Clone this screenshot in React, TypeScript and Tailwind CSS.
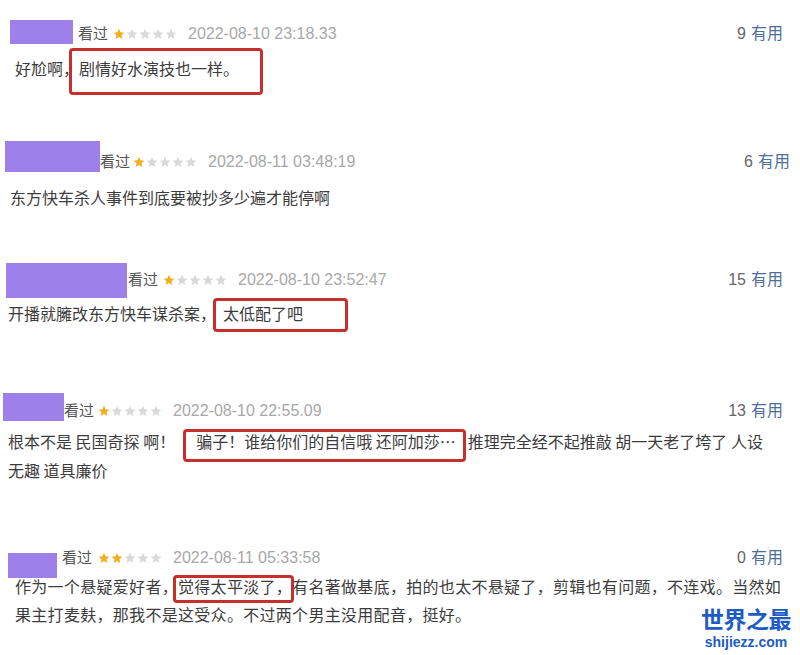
import type { ReactNode } from 'react';

function Stars({ n }: { n: number }) {
  return (
    <span className="flex gap-[1px]">
      {[0, 1, 2, 3, 4].map((i) => (
        <svg
          key={i}
          viewBox="0 0 24 24"
          className={`w-[12px] h-[12px] ${i < n ? 'fill-[#f2b01e]' : 'fill-[#d9d9d9]'}`}
        >
          <path d="M12 1.5l3.1 7.1 7.7.7-5.8 5.1 1.7 7.6L12 18l-6.7 4 1.7-7.6-5.8-5.1 7.7-.7z" />
        </svg>
      ))}
    </span>
  );
}

// red annotation box drawn over part of a comment
function Mark({ children, cls, box }: { children: ReactNode; cls: string; box: string }) {
  return (
    <span className={`relative inline-block ${cls}`}>
      {children}
      <span className={`absolute border-[3px] border-[#c5302c] rounded-[4px] ${box}`} />
    </span>
  );
}

interface CommentProps {
  section: string;
  rect: string;
  headMt: string;
  starsMl: string;
  likesMr: string;
  stars: number;
  time: string;
  likes: number;
  body: string;
  children: ReactNode;
}

function Comment({ section, rect, headMt, starsMl, likesMr, stars, time, likes, body, children }: CommentProps) {
  return (
    <section className={section}>
      <div className="flex items-start">
        <div className={`shrink-0 bg-[#9d80ea] ${rect}`} />
        <div className={`flex items-center h-[24px] ${headMt}`}>
          <span className="text-[15px] text-[#555555]">看过</span>
          <span className={starsMl}>
            <Stars n={stars} />
          </span>
          <span className="ml-[11px] text-[16px] text-[#a8a8a8]">{time}</span>
        </div>
        <div className={`ml-auto flex items-center h-[24px] text-[16px] ${headMt} ${likesMr}`}>
          <span className="text-[#666666]">{likes}</span>
          <span className="ml-[5px] text-[#4d6f99]">有用</span>
        </div>
      </div>
      <p
        className={`text-[16px] text-[#3c3c3c] whitespace-nowrap font-['Noto_Sans_CJK_SC','Liberation_Sans',sans-serif] ${body}`}
      >
        {children}
      </p>
    </section>
  );
}

export default function App() {
  return (
    <div className="relative w-[800px] h-[655px] overflow-hidden bg-white font-['Liberation_Sans','Noto_Sans_CJK_SC',sans-serif]">
      <Comment
        section="h-[130px] pt-[20px]"
        rect="ml-[10px] mr-[5px] w-[63px] h-[24px]"
        headMt="mt-[2px]"
        starsMl="ml-[5px]"
        likesMr="mr-[17px]"
        stars={1}
        time="2022-08-10 23:18.33"
        likes={9}
        body="mt-[10px] pl-[15px] leading-[24px]"
      >
        好尬啊，
        <Mark cls="" box="left-[-10px] right-[-24px] top-[-8px] bottom-[-15px]">
          剧情好水演技也一样。
        </Mark>
      </Comment>

      <Comment
        section="h-[120px] pt-[11px]"
        rect="ml-[5px] w-[95px] h-[31px]"
        headMt="mt-[9px]"
        starsMl="ml-[3px]"
        likesMr="mr-[10px]"
        stars={1}
        time="2022-08-11 03:48:19"
        likes={6}
        body="mt-[11px] pl-[10px] leading-[24px]"
      >
        东方快车杀人事件到底要被抄多少遍才能停啊
      </Comment>

      <Comment
        section="h-[130px] pt-[13px]"
        rect="ml-[6px] mr-[1px] w-[121px] h-[35px]"
        headMt="mt-[5px]"
        starsMl="ml-[5px]"
        likesMr="mr-[17px]"
        stars={1}
        time="2022-08-10 23:52:47"
        likes={15}
        body="mt-[3px] pl-[8px] leading-[24px]"
      >
        开播就臃改东方快车谋杀案，
        <Mark cls="ml-[7px]" box="left-[-10px] right-[-45px] top-[-3px] bottom-[-7px]">
          太低配了吧
        </Mark>
      </Comment>

      <Comment
        section="h-[150px] pt-[13px]"
        rect="ml-[3px] w-[61px] h-[28px]"
        headMt="mt-[6px]"
        starsMl="ml-[4px]"
        likesMr="mr-[17px]"
        stars={1}
        time="2022-08-10 22:55.09"
        likes={13}
        body="mt-[4px] pl-[8px] leading-[29px]"
      >
        根本不是 民国奇探 啊！
        <Mark cls="ml-[21px] mr-[12px]" box="left-[-13px] right-[-10px] top-[2px] bottom-[-6px]">
          骗子！谁给你们的自信哦 还阿加莎…
        </Mark>
        推理完全经不起推敲 胡一天老了垮了 人设
        <br />
        无趣 道具廉价
      </Comment>

      <Comment
        section="h-[125px] pt-[16px]"
        rect="ml-[8px] mr-[5px] mt-[7px] w-[49px] h-[25px]"
        headMt="mt-0"
        starsMl="ml-[6px]"
        likesMr="mr-[17px]"
        stars={2}
        time="2022-08-11 05:33:58"
        likes={0}
        body="mt-[-6px] pl-[15px] leading-[28px] tracking-[0.3px]"
      >
        作为一个悬疑爱好者，
        <Mark cls="" box="left-[-5px] right-[-2px] top-[3px] bottom-[-3px]">
          觉得太平淡了，
        </Mark>
        有名著做基底，拍的也太不悬疑了，剪辑也有问题，不连戏。当然如
        <br />
        果主打麦麸，那我不是这受众。不过两个男主没用配音，挺好。
      </Comment>

      <div className="absolute left-[701px] top-[608px] flex flex-col items-center text-[#1d5cc4] font-bold">
        <span className="text-[23px] leading-[25px] tracking-[-0.5px]">世界之最</span>
        <span className="mt-[2px] text-[14px] leading-[15px]">shijiezz.com</span>
      </div>
    </div>
  );
}
